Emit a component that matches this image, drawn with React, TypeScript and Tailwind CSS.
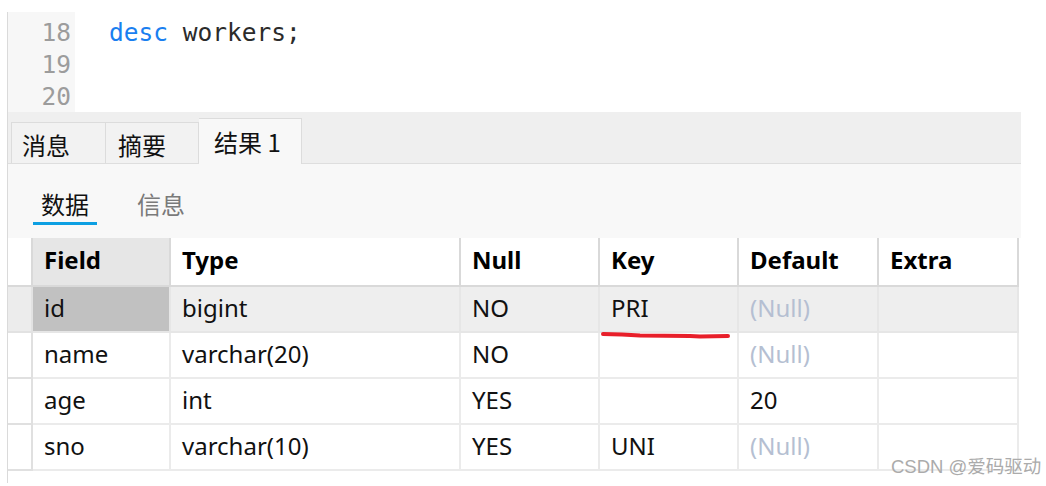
import React from "react";

const FONT = { fontFamily: '"Noto Sans", "Open Sans", "Noto Sans CJK SC", sans-serif' };
const CJK = { fontFamily: '"Noto Sans CJK SC", "Noto Sans", sans-serif' };
const MONO = { fontFamily: '"DejaVu Sans Mono", "Liberation Mono", monospace' };

type Row = { field: string; type: string; nul: string; key: string; def: string | null; extra: string };

const rows: Row[] = [
  { field: "id", type: "bigint", nul: "NO", key: "PRI", def: null, extra: "" },
  { field: "name", type: "varchar(20)", nul: "NO", key: "", def: null, extra: "" },
  { field: "age", type: "int", nul: "YES", key: "", def: "20", extra: "" },
  { field: "sno", type: "varchar(10)", nul: "YES", key: "UNI", def: null, extra: "" },
];

const cols = "grid grid-cols-[25px_138px_290px_139px_139px_140px_140px]";

export default function App() {
  return (
    <div className="relative w-[1046px] h-[486px] bg-white overflow-hidden" style={FONT}>
      <div className="ml-[7px] mt-[12px] w-[1014px] h-[471px] border-l border-[#dadada] flex flex-col">
        {/* editor */}
        <div className="flex h-[100px] overflow-hidden" style={MONO}>
          <div className="w-[67px] bg-[#f7f7f7] pt-[5px] pr-[4px] text-right text-[24.5px] leading-[32px] text-[#9c9c9c]">
            <div>18</div>
            <div>19</div>
            <div>20</div>
          </div>
          <div className="flex-1 pl-[34px] pt-[5px] text-[24.5px] leading-[32px] text-[#2b2b2b] whitespace-pre">
            <div>
              <span className="text-[#1a7ff0]">desc</span> workers;
            </div>
          </div>
        </div>

        {/* result tabs */}
        <div className="h-[52px] bg-[#efefef] border-b border-[#dedede] flex items-end pl-[3px]" style={CJK}>
          <div className="w-[95px] h-[41px] bg-[#f2f2f2] border border-b-0 border-[#dcdcdc] flex items-center pl-[10px] pt-[3px] text-[24px] text-[#111]">
            消息
          </div>
          <div className="w-[93px] h-[41px] bg-[#f2f2f2] border border-l-0 border-b-0 border-[#dcdcdc] flex items-center pl-[12px] pt-[3px] text-[24px] text-[#111]">
            摘要
          </div>
          <div className="w-[103px] h-[46px] -mb-px bg-[#f8f8f8] border border-l-0 border-b-0 border-[#dcdcdc] flex items-center pl-[15px] text-[24px] text-[#111]">
            结果 1
          </div>
        </div>

        {/* sub tabs */}
        <div className="h-[74px] bg-[#f8f8f8] flex items-start pl-[25px] pt-[28px]" style={CJK}>
          <div className="flex flex-col items-center w-[64px]">
            <div className="text-[24px] leading-[24px] text-[#111]">数据</div>
            <div className="mt-[6px] w-[64px] h-[3px] bg-[#0c9fe2]" />
          </div>
          <div className="ml-[40px] text-[24px] leading-[24px] text-[#7a7a7a]">信息</div>
        </div>

        {/* table */}
        <div className="w-[1011px]">
          <div className={`${cols} h-[49px]`}>
            <div className="bg-white border-r-2 border-b-2 border-[#d9d9d9]" />
            {["Field", "Type", "Null", "Key", "Default", "Extra"].map((h, i) => (
              <div
                key={h}
                className={`${i === 0 ? "bg-[#e6e6e6]" : "bg-white"} border-r-2 border-b-2 border-[#d9d9d9] flex items-center pl-[11px] pb-[3px] text-[24px] font-bold text-black`}
              >
                {h}
              </div>
            ))}
          </div>
          {rows.map((r, ri) => {
            const sel = ri === 0;
            const cellBase = `border-r-2 border-b-2 ${sel ? "border-[#e6e6e6]" : "border-[#ebebeb]"} flex items-center pl-[11px] pb-[3px] text-[24px] text-[#111]`;
            return (
              <div key={r.field} className={`${cols} h-[46px] ${sel ? "bg-[#eeeeee]" : "bg-white"}`}>
                <div className={`border-r-2 border-b-2 ${sel ? "bg-[#ececec] border-[#e2e2e2]" : "border-[#e0e0e0]"}`} />
                <div className={`${cellBase} ${sel ? "bg-[#c1c1c1]" : ""}`}>{r.field}</div>
                <div className={cellBase}>{r.type}</div>
                <div className={cellBase}>{r.nul}</div>
                <div className={cellBase}>{r.key}</div>
                <div className={cellBase}>
                  {r.def === null ? <span className="text-[#b5bfd2]">(Null)</span> : r.def}
                </div>
                <div className={cellBase}>{r.extra}</div>
              </div>
            );
          })}
        </div>
      </div>

      {/* red hand-drawn underline */}
      <svg className="absolute left-0 top-0 pointer-events-none" width="1046" height="486">
        <polyline
          points="603,334 622,334.5 640,335.5 690,336 700,336.5 728,336"
          fill="none"
          stroke="#e81f2a"
          strokeWidth="4"
          strokeLinecap="round"
          strokeLinejoin="round"
        />
      </svg>

      {/* watermark */}
      <div
        className="absolute left-[891px] top-[455px] text-[18.5px] leading-[24px] text-[#ababab] whitespace-nowrap"
        style={{ fontFamily: '"Liberation Sans", "Noto Sans CJK SC", sans-serif' }}
      >
        CSDN @爱码驱动
      </div>
    </div>
  );
}
